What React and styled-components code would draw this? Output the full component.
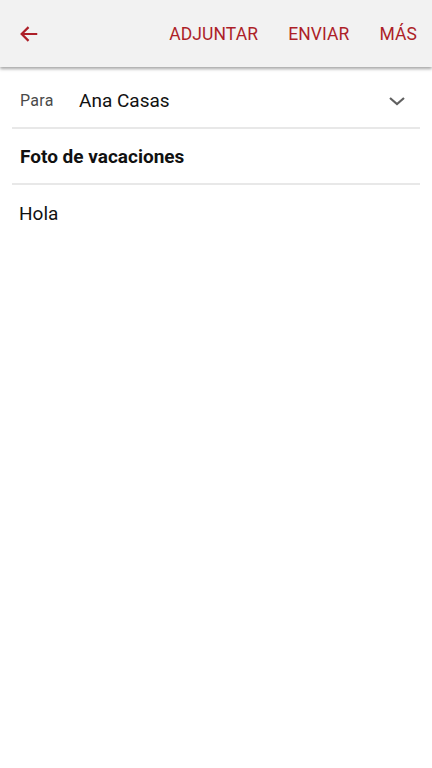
import React from 'react';
import styled, { createGlobalStyle } from 'styled-components';

const GlobalStyle = createGlobalStyle`
  html, body {
    margin: 0;
    padding: 0;
    background: #ffffff;
    font-family: Roboto, "Liberation Sans", sans-serif;
  }
  * {
    box-sizing: border-box;
  }
`;

const Screen = styled.div`
  width: 432px;
  height: 768px;
  background: #ffffff;
  display: flex;
  flex-direction: column;
`;

const Toolbar = styled.header`
  height: 67px;
  flex-shrink: 0;
  background: #f2f2f2;
  display: flex;
  align-items: center;
  padding: 0 15px 0 16px;
  position: relative;
  z-index: 1;
  box-shadow: 0 2px 3px rgba(0, 0, 0, 0.35);
`;

const BackButton = styled.button`
  background: none;
  border: none;
  padding: 0;
  width: 26px;
  height: 26px;
  display: flex;
  align-items: center;
  justify-content: center;
  cursor: pointer;
`;

const Actions = styled.nav`
  margin-left: auto;
  display: flex;
  gap: 30px;
`;

const Action = styled.button`
  background: none;
  border: none;
  padding: 0;
  font-family: Roboto, "Liberation Sans", sans-serif;
  font-size: 17.5px;
  color: #ad1f28;
  letter-spacing: 0.1px;
  cursor: pointer;
`;

const Fields = styled.div`
  padding: 7px 12px 0;
`;

const Row = styled.div`
  height: ${(p) => p.height}px;
  display: flex;
  align-items: center;
  padding: 0 14px 0 8px;
  border-bottom: 2px solid #e8e8e8;
`;

const Label = styled.span`
  font-size: 16px;
  letter-spacing: 0.3px;
  color: #4a4a4a;
  width: 59px;
`;

const Recipient = styled.span`
  font-size: 19px;
  color: #111111;
  flex: 1;
`;

const Subject = styled.span`
  font-size: 19px;
  font-weight: 700;
  color: #111111;
`;

const Body = styled.div`
  padding: 17px 19px;
  font-size: 19px;
  color: #111111;
`;

const App = () => (
  <Screen>
    <GlobalStyle />
    <Toolbar>
      <BackButton aria-label="Atrás">
        <svg width="22" height="22" viewBox="0 0 24 24">
          <path
            d="M21 12H4M11.5 4.5L4 12l7.5 7.5"
            fill="none"
            stroke="#ad1f28"
            strokeWidth="2.4"
          />
        </svg>
      </BackButton>
      <Actions>
        <Action>ADJUNTAR</Action>
        <Action>ENVIAR</Action>
        <Action>MÁS</Action>
      </Actions>
    </Toolbar>
    <Fields>
      <Row height={55}>
        <Label>Para</Label>
        <Recipient>Ana Casas</Recipient>
        <svg width="18" height="12" viewBox="0 0 18 12">
          <path d="M2 3l7 6 7-6" fill="none" stroke="#606060" strokeWidth="2.2" />
        </svg>
      </Row>
      <Row height={56}>
        <Subject>Foto de vacaciones</Subject>
      </Row>
    </Fields>
    <Body>Hola</Body>
  </Screen>
);

export default App;
